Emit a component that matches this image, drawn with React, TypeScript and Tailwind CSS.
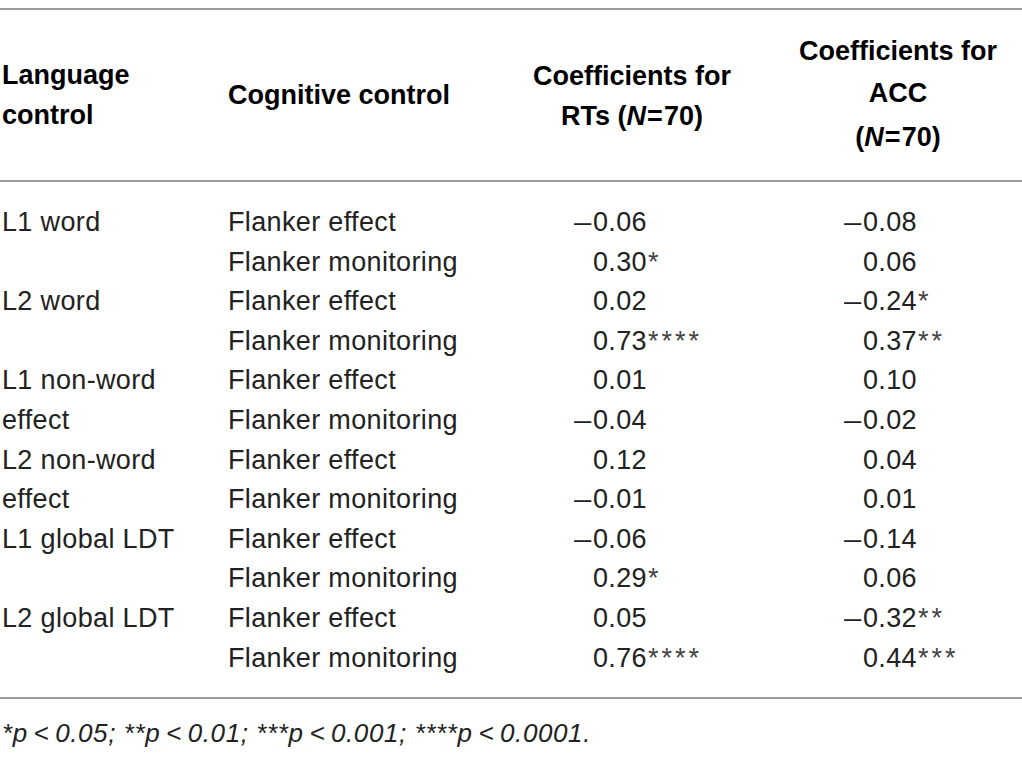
import React from 'react';

type Row = {
  lang: string;
  cog: string;
  rt: string;
  acc: string;
};

const rows: Row[] = [
  { lang: 'L1 word', cog: 'Flanker effect', rt: '–0.06', acc: '–0.08' },
  { lang: '', cog: 'Flanker monitoring', rt: '0.30*', acc: '0.06' },
  { lang: 'L2 word', cog: 'Flanker effect', rt: '0.02', acc: '–0.24*' },
  { lang: '', cog: 'Flanker monitoring', rt: '0.73****', acc: '0.37**' },
  { lang: 'L1 non-word', cog: 'Flanker effect', rt: '0.01', acc: '0.10' },
  { lang: 'effect', cog: 'Flanker monitoring', rt: '–0.04', acc: '–0.02' },
  { lang: 'L2 non-word', cog: 'Flanker effect', rt: '0.12', acc: '0.04' },
  { lang: 'effect', cog: 'Flanker monitoring', rt: '–0.01', acc: '0.01' },
  { lang: 'L1 global LDT', cog: 'Flanker effect', rt: '–0.06', acc: '–0.14' },
  { lang: '', cog: 'Flanker monitoring', rt: '0.29*', acc: '0.06' },
  { lang: 'L2 global LDT', cog: 'Flanker effect', rt: '0.05', acc: '–0.32**' },
  { lang: '', cog: 'Flanker monitoring', rt: '0.76****', acc: '0.44***' },
];

// number with the sign in its own slot so the digits line up
function Num({ value }: { value: string }) {
  const neg = value.startsWith('–');
  const body = neg ? value.slice(1) : value;
  const m = body.match(/^([0-9.]+)(\**)$/);
  const digits = m ? m[1] : body;
  const stars = m ? m[2] : '';
  return (
    <span className="flex items-center">
      <span className="inline-block w-[19px] scale-x-[1.15] origin-left">{neg ? '–' : ''}</span>
      <span>{digits}</span>
      {stars && <span className="text-[#444] tracking-[3px] pl-[1px]">{stars}</span>}
    </span>
  );
}

function Rule() {
  return <div className="border-t-2 border-[#9a9a9a]" />;
}

export default function App() {
  return (
    <div className="w-[1022px] h-[759px] bg-white text-black font-['Liberation_Sans',Arial,sans-serif] overflow-hidden">
      <div className="pt-[8px]">
        <Rule />

        {/* header */}
        <div className="grid grid-cols-[228px_304px_200px_1fr] h-[170px] items-center text-[27px] font-bold leading-[40px]">
          <div className="pl-[2px]">
            <div>Language</div>
            <div>control</div>
          </div>
          <div>Cognitive control</div>
          <div className="text-center pt-[2px]">
            <div className="whitespace-nowrap">Coefficients for</div>
            <div>
              RTs (<i>N</i>
              <span className="px-[1px]">=</span>70)
            </div>
          </div>
          <div className="text-center pl-[42px] pb-[3px]">
            <div className="leading-[42px] whitespace-nowrap">Coefficients for</div>
            <div className="leading-[42px]">ACC</div>
            <div className="mt-[3px]">
              (<i>N</i>
              <span className="px-[1px]">=</span>70)
            </div>
          </div>
        </div>

        <Rule />

        {/* body */}
        <div className="pt-[20px] pb-[20px] text-[27px] tracking-[0.35px] text-[#222]">
          {rows.map((r, i) => (
            <div key={i} className="grid grid-cols-[228px_346px_270px_1fr] h-[39.6px] items-center">
              <div className="pl-[2px] whitespace-nowrap">{r.lang}</div>
              <div className="whitespace-nowrap">{r.cog}</div>
              <Num value={r.rt} />
              <Num value={r.acc} />
            </div>
          ))}
        </div>

        <Rule />

        <div className="mt-[19px] pl-[2px] text-[26px] italic leading-[30px] tracking-[0.6px] text-[#222]">
          *p&thinsp;&lt;&thinsp;0.05; **p&thinsp;&lt;&thinsp;0.01; ***p&thinsp;&lt;&thinsp;0.001; ****p&thinsp;&lt;&thinsp;0.0001.
        </div>
      </div>
    </div>
  );
}
